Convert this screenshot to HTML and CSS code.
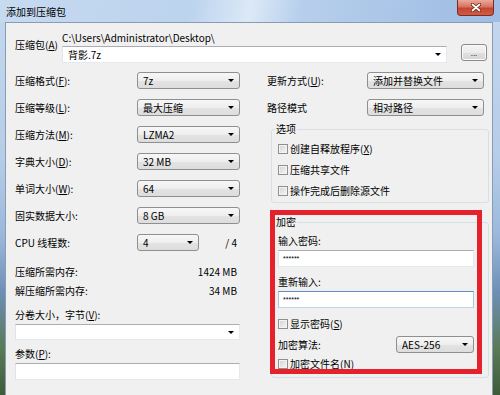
FILE: index.html
```html
<!DOCTYPE html>
<html lang="zh-CN">
<head>
  <meta charset="UTF-8">
  <title>添加到压缩包</title>
  <link rel="stylesheet" href="styles.css">
</head>
<body>

<div class="window">
  <div class="titlebar">
    <span class="title">添加到压缩包</span>
    <div class="close-btn">
      <svg width="10" height="9" viewBox="0 0 10 9">
        <path d="M1.5 1.5 L8.5 7.5 M8.5 1.5 L1.5 7.5" stroke="#6a2018" stroke-width="3.4" stroke-linecap="round"/>
        <path d="M1.5 1.5 L8.5 7.5 M8.5 1.5 L1.5 7.5" stroke="#fff" stroke-width="1.8" stroke-linecap="round"/>
      </svg>
    </div>
  </div>

  <div class="client">
    <div class="archive-row">
      <span class="archive-label">压缩包(<u>A</u>)</span>
      <div class="archive-field">
        <div class="archive-path">C:\Users\Administrator\Desktop\</div>
        <div class="combo edit"><span class="combo-text">背影.7z</span><span class="arrow"></span></div>
      </div>
      <div class="browse-btn">...</div>
    </div>

    <div class="columns">
      <div class="col-left">
        <div class="form-grid">
          <span>压缩格式(<u>F</u>):</span>
          <div class="combo"><span class="combo-text">7z</span><span class="arrow"></span></div>
          <span>压缩等级(<u>L</u>):</span>
          <div class="combo"><span class="combo-text">最大压缩</span><span class="arrow"></span></div>
          <span>压缩方法(<u>M</u>):</span>
          <div class="combo"><span class="combo-text">LZMA2</span><span class="arrow"></span></div>
          <span>字典大小(<u>D</u>):</span>
          <div class="combo"><span class="combo-text">32 MB</span><span class="arrow"></span></div>
          <span>单词大小(<u>W</u>):</span>
          <div class="combo"><span class="combo-text">64</span><span class="arrow"></span></div>
          <span>固实数据大小:</span>
          <div class="combo"><span class="combo-text">8 GB</span><span class="arrow"></span></div>
          <span>CPU 线程数:</span>
          <div class="cpu-cell">
            <div class="combo cpu"><span class="combo-text">4</span><span class="arrow"></span></div>
            <span class="cpu-max">/ 4</span>
          </div>
        </div>

        <div class="mem">
          <div class="mem-row"><span>压缩所需内存:</span><span>1424 MB</span></div>
          <div class="mem-row"><span>解压缩所需内存:</span><span>34 MB</span></div>
        </div>

        <div class="field-label">分卷大小，字节(<u>V</u>):</div>
        <div class="combo edit split"><span class="combo-text"></span><span class="arrow"></span></div>
        <div class="field-label params-label">参数(<u>P</u>):</div>
        <div class="edit-box params"></div>
      </div>

      <div class="col-right">
        <div class="form-grid right-grid">
          <span>更新方式(<u>U</u>):</span>
          <div class="combo"><span class="combo-text">添加并替换文件</span><span class="arrow"></span></div>
          <span>路径模式</span>
          <div class="combo"><span class="combo-text">相对路径</span><span class="arrow"></span></div>
        </div>

        <fieldset class="group options">
          <legend>选项</legend>
          <div class="check-row"><span class="check"></span>创建自释放程序(<u>X</u>)</div>
          <div class="check-row"><span class="check"></span>压缩共享文件</div>
          <div class="check-row"><span class="check"></span>操作完成后删除源文件</div>
        </fieldset>

        <fieldset class="group encrypt">
          <legend>加密</legend>
          <div class="field-label first">输入密码:</div>
          <div class="edit-box pw"><span class="pw-text">******</span></div>
          <div class="field-label">重新输入:</div>
          <div class="edit-box pw focused"><span class="pw-text">******</span></div>
          <div class="check-row"><span class="check"></span>显示密码(<u>S</u>)</div>
          <div class="algo-row">
            <span>加密算法:</span>
            <div class="combo algo"><span class="combo-text">AES-256</span><span class="arrow"></span></div>
          </div>
          <div class="check-row"><span class="check"></span>加密文件名(<u>N</u>)</div>
        </fieldset>
      </div>
    </div>

    <div class="highlight"></div>
  </div>
</div>

</body>
</html>
```

FILE: styles.css
```css
html, body {
  margin: 0;
  padding: 0;
}

body {
  width: 500px;
  height: 395px;
  overflow: hidden;
  font-family: "Noto Sans CJK SC", "Liberation Sans", sans-serif;
  font-size: 10px;
  line-height: 12px;
  color: #000;
}

u {
  text-decoration-thickness: 1px;
  text-underline-offset: 1px;
}

.window {
  height: 100%;
  display: flex;
  flex-direction: column;
  background: linear-gradient(to bottom, #c4d8ef 0%, #b6cde8 40%, #9ab7db 60%, #6d8fb6 74%, #5a7a58 88%, #3f5c38 100%);
}

.titlebar {
  height: 22px;
  flex-shrink: 0;
  display: flex;
  justify-content: space-between;
  align-items: flex-start;
  padding: 0 6px;
  background: linear-gradient(100deg, #c6daf0 0%, #bcd3ee 38%, #dce9f7 50%, #b7cfec 60%, #a6c2e6 85%, #9fbde4 100%);
}

.title {
  margin-top: 6px;
}

.close-btn {
  width: 37px;
  height: 16px;
  box-sizing: border-box;
  border: 1px solid #7d2c24;
  border-top: none;
  border-radius: 0 0 4px 4px;
  background: linear-gradient(to bottom, #eaa99a 0%, #d9735f 45%, #c5452f 55%, #cf5c45 100%);
  display: flex;
  align-items: center;
  justify-content: center;
}

.client {
  flex: 1;
  margin: 0 7px 0 5px;
  background: #f0f0f0;
  border: 1px solid #8a9bb2;
  border-bottom: none;
  padding: 9px 3px 0 9px;
  position: relative;
}

.archive-row {
  display: flex;
  align-items: flex-start;
}

.archive-label {
  width: 47px;
  margin-top: 7px;
}

.archive-field {
  width: 385px;
}

.archive-path {
  height: 12px;
  white-space: nowrap;
}

.archive-field .combo {
  margin-top: 2px;
}

.browse-btn {
  width: 26px;
  height: 17px;
  margin: 12px 2px 0 auto;
  box-sizing: border-box;
  border: 1px solid #8a8a8a;
  border-radius: 3px;
  background: linear-gradient(to bottom, #f4f4f4 0%, #ececec 50%, #e0e0e0 51%, #d6d6d6 100%);
  box-shadow: inset 0 0 0 1px #fbfbfb;
  display: flex;
  justify-content: center;
  align-items: center;
  font-size: 8px;
  line-height: 10px;
  color: #333;
}

.combo {
  height: 17px;
  box-sizing: border-box;
  display: flex;
  align-items: center;
  padding: 0 4px 0 5px;
  border: 1px solid #8e8f8f;
  border-radius: 3px;
  background: linear-gradient(to bottom, #f7f7f7 0%, #eeeeee 50%, #e3e3e3 51%, #dddddd 100%);
}

.combo-text {
  flex: 1;
  white-space: nowrap;
  line-height: 14px;
}

.arrow {
  width: 0;
  height: 0;
  border-left: 3px solid transparent;
  border-right: 3px solid transparent;
  border-top: 3px solid #000;
  margin-right: 1px;
}

.combo.edit {
  background: #fff;
  border-radius: 0;
  border-color: #abadb3 #e3e9ef #e3e9ef #e2e3ea;
}

.columns {
  display: flex;
  gap: 27px;
  margin-top: 9px;
}

.col-left {
  width: 225px;
}

.col-right {
  width: 222px;
}

.form-grid {
  display: grid;
  grid-template-columns: 122px 103px;
  grid-auto-rows: 17px;
  row-gap: 10px;
  align-items: center;
}

.right-grid {
  grid-template-columns: 100px 117px;
}

.cpu-cell {
  display: flex;
  justify-content: space-between;
  align-items: center;
}

.combo.cpu {
  width: 62px;
}

.cpu-max {
  padding-right: 3px;
}

.mem {
  margin-top: 11px;
}

.mem-row {
  height: 19px;
  display: flex;
  justify-content: space-between;
  align-items: center;
  padding-right: 3px;
}

.field-label {
  margin-top: 9px;
}

.combo.split {
  margin-top: 3px;
  height: 16px;
}

.params-label {
  margin-top: 8px;
}

.edit-box {
  height: 17px;
  box-sizing: border-box;
  background: #fff;
  border: 1px solid;
  border-color: #abadb3 #e3e9ef #e3e9ef #e2e3ea;
  padding: 0 4px;
  display: flex;
  align-items: center;
}

.edit-box.params {
  margin-top: 3px;
}

.edit-box.focused {
  border-color: #5b8fc4 #a4c9e3 #b7d9ed #a4c9e3;
}

.pw-text {
  font-family: "Liberation Sans", sans-serif;
  font-size: 7px;
  line-height: 8px;
  margin-top: 1px;
}

.group {
  margin: 7px 0 0 4px;
  width: 218px;
  min-width: 0;
  box-sizing: border-box;
  border: 1px solid #d5dfe5;
  border-radius: 3px;
}

.group legend {
  padding: 0 1px;
  margin-left: -3px;
}

.options {
  padding: 3px 14px 1px 6px;
}

.options .check-row {
  height: 21px;
}

.check-row {
  display: flex;
  align-items: center;
}

.check {
  width: 10px;
  height: 10px;
  box-sizing: border-box;
  border: 1px solid #8f8f8f;
  background: linear-gradient(135deg, #d2d2d2 0%, #e9e9e9 60%, #f6f6f6 100%);
  box-shadow: inset 0 0 0 1px #f3f3f3;
  margin-right: 2px;
}

.encrypt {
  margin-top: 13px;
  padding: 7px 14px 7px 6px;
}

.encrypt .field-label.first {
  margin-top: 0;
}

.encrypt .edit-box {
  margin-top: 3px;
}

.encrypt .check-row {
  height: 12px;
  margin-top: 10px;
}

.algo-row {
  margin-top: 6px;
  height: 17px;
  display: flex;
  justify-content: space-between;
  align-items: center;
}

.combo.algo {
  width: 78px;
}

.encrypt .algo-row + .check-row {
  margin-top: 5px;
}

.highlight {
  position: absolute;
  left: 264px;
  top: 187px;
  width: 212px;
  height: 164px;
  box-sizing: border-box;
  border: 5px solid #e5212b;
  pointer-events: none;
}
```
